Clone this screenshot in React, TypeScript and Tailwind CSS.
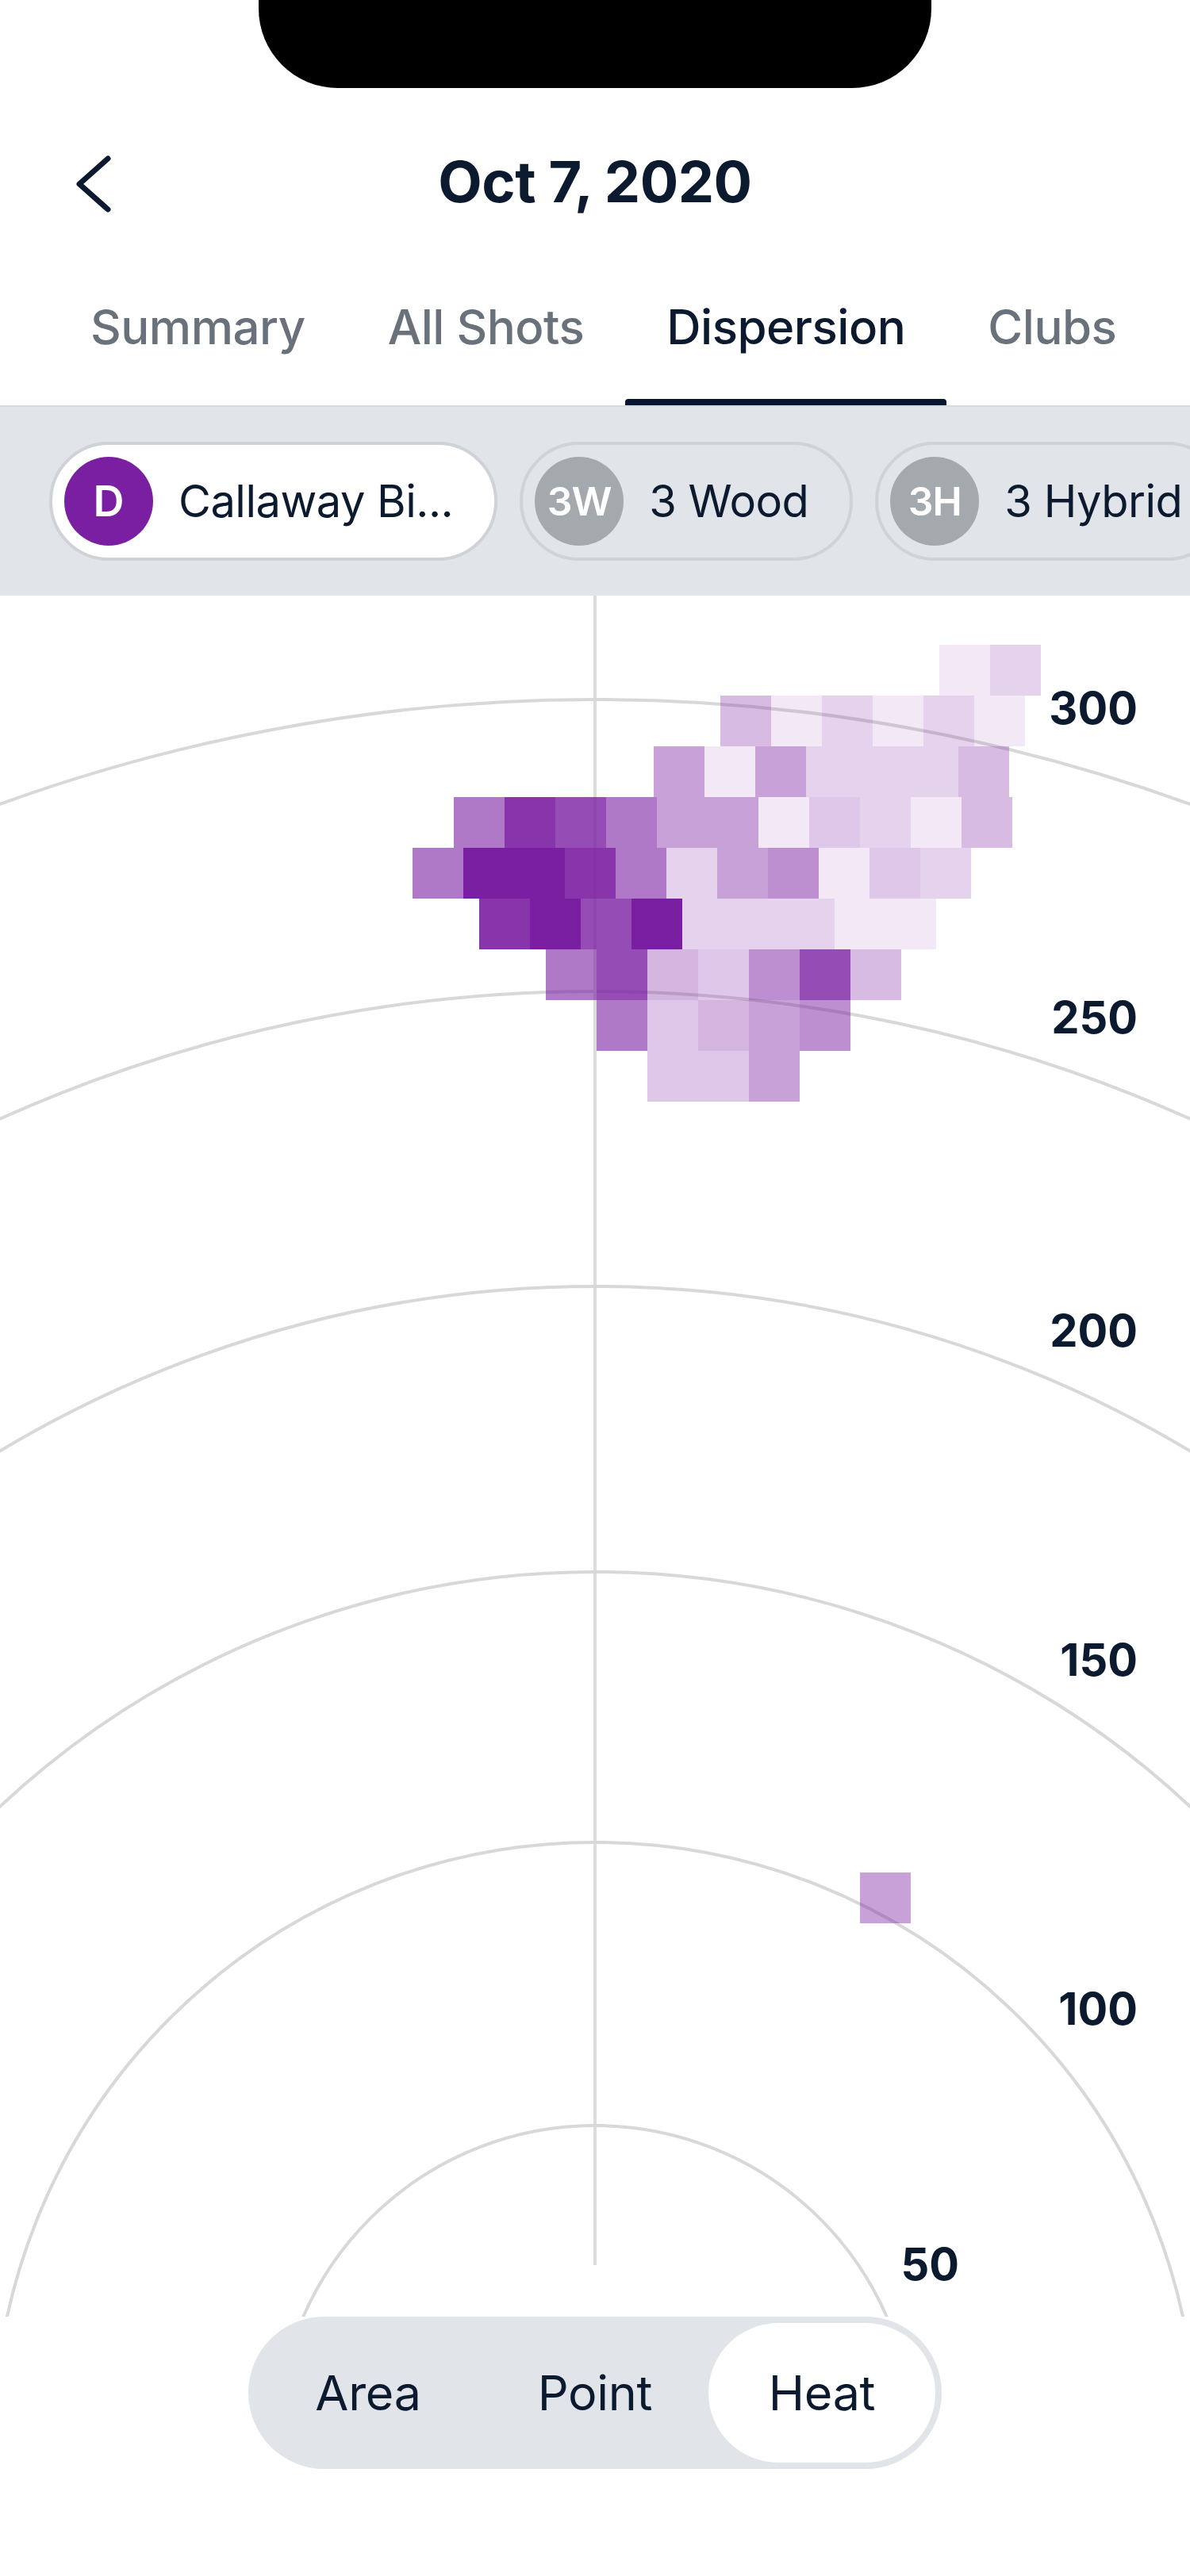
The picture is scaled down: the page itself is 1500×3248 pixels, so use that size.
import React from 'react';

const NAVY = '#0b1a2f';

// heat map rows: top y, left x of first cell, opacity of each 64px cell
const heatRows: [number, number, number[]][] = [
  [812, 1184, [0.1, 0.2]],
  [876, 908, [0.3, 0.1, 0.2, 0.1, 0.2, 0.1]],
  [940, 824, [0.42, 0.1, 0.42, 0.2, 0.2, 0.2, 0.3]],
  [1004, 572, [0.6, 0.9, 0.8, 0.6, 0.42, 0.42, 0.1, 0.25, 0.2, 0.1, 0.3]],
  [1068, 520, [0.6, 1, 1, 0.9, 0.6, 0.2, 0.42, 0.5, 0.1, 0.25, 0.2]],
  [1132, 604, [0.9, 1, 0.8, 1, 0.2, 0.2, 0.2, 0.1, 0.1]],
  [1196, 688, [0.6, 0.8, 0.33, 0.25, 0.5, 0.8, 0.3]],
  [1260, 752, [0.6, 0.25, 0.33, 0.42, 0.5]],
  [1324, 816, [0.25, 0.25, 0.42]],
  [2360, 1084, [0.42]],
];

// yardage rings around the tee point
const rings = [
  { r: 401, label: '50', x: 1209, y: 2874 },
  { r: 758, label: '100', x: 1434, y: 2552 },
  { r: 1099, label: '150', x: 1434, y: 2112 },
  { r: 1459, label: '200', x: 1434, y: 1697 },
  { r: 1831, label: '250', x: 1434, y: 1302 },
  { r: 2199, label: '300', x: 1434, y: 912 },
];

const tabs = ['Summary', 'All Shots', 'Dispersion', 'Clubs'];

const clubs = [
  { short: 'D', name: 'Callaway Bi...', active: true },
  { short: '3W', name: '3 Wood', active: false },
  { short: '3H', name: '3 Hybrid', active: false },
];

function DispersionChart() {
  return (
    <svg width={1500} height={2170} viewBox="0 750 1500 2170" className="block">
      <line x1={750} y1={750} x2={750} y2={2855} stroke="#dcdcdc" strokeWidth={4} />
      {rings.map((ring) => (
        <circle key={ring.r} cx={750} cy={3080} r={ring.r} fill="none" stroke="#d8d8d8" strokeWidth={4} />
      ))}
      {heatRows.map(([y, x0, cells]) =>
        cells.map((a, i) => (
          <rect key={`${y}-${i}`} x={x0 + i * 64} y={y} width={64} height={64} fill={`rgba(123,31,162,${a})`} />
        ))
      )}
      {rings.map((ring) => (
        <text
          key={ring.label}
          x={ring.x}
          y={ring.y}
          textAnchor="end"
          fontFamily="Inter, sans-serif"
          fontWeight={700}
          fontSize={56}
          fill={NAVY}
        >
          {ring.label}
        </text>
      ))}
    </svg>
  );
}

export default function App() {
  return (
    <div className="relative w-[1500px] h-[3248px] overflow-hidden bg-white [font-family:Inter,sans-serif] text-[#0b1a2f]">
      {/* device notch */}
      <div className="absolute top-0 left-[326px] w-[848px] h-[111px] bg-black rounded-b-[100px]" />

      <div className="h-[160px]" />

      <header className="grid grid-cols-[1fr_auto_1fr] items-center h-[137px]">
        <div className="pl-[96px] pt-[6px]">
          <svg width={48} height={80} viewBox="0 0 48 80" fill="none">
            <path d="M40 8 L4 40 L40 72" stroke={NAVY} strokeWidth={7} strokeLinecap="round" strokeLinejoin="round" />
          </svg>
        </div>
        <h1 className="text-[72px] font-bold leading-none tracking-[-0.5px]">Oct 7, 2020</h1>
        <div />
      </header>

      <nav className="flex h-[214px] pl-[62px]">
        {tabs.map((t) => {
          const on = t === 'Dispersion';
          return (
            <div key={t} className="flex flex-col items-stretch">
              <span
                className={`px-[52px] pt-[85px] text-[60px] font-medium leading-none tracking-[-0.5px] ${on ? 'text-[#0b1a2f]' : 'text-[#69717b]'}`}
              >
                {t}
              </span>
              <div className={`mt-auto h-[8px] rounded-t-[4px] ${on ? 'bg-[#061530]' : 'bg-transparent'}`} />
            </div>
          );
        })}
      </nav>

      <div className="flex items-center gap-[28px] h-[240px] pl-[62px] bg-[#e1e4e8] border-t-[2px] border-[#d8dbdf] overflow-hidden">
        {clubs.map((c) => (
          <div
            key={c.short}
            className={`flex shrink-0 items-center gap-[32px] h-[150px] pl-[15px] pr-[52px] rounded-full border-[4px] border-[#cfd3d8] ${c.active ? 'bg-white' : 'bg-transparent'}`}
          >
            <div
              className={`flex items-center justify-center w-[112px] h-[112px] rounded-full text-white font-semibold leading-none ${c.active ? 'bg-[#7b1fa2] text-[54px]' : 'bg-[#a4a9ae] text-[50px] tracking-[-1px]'}`}
            >
              {c.short}
            </div>
            <span className="text-[56px] leading-none tracking-[-0.5px] text-[#0b1a2f] whitespace-nowrap">{c.name}</span>
          </div>
        ))}
      </div>

      <DispersionChart />

      <div className="flex justify-center">
        <div className="flex w-[874px] h-[192px] p-[8px] rounded-full bg-[#e1e4e8]">
          {['Area', 'Point', 'Heat'].map((m) => (
            <div
              key={m}
              className={`flex flex-1 items-center justify-center rounded-full text-[61px] leading-none tracking-[-0.3px] ${m === 'Heat' ? 'bg-white' : ''}`}
            >
              {m}
            </div>
          ))}
        </div>
      </div>
    </div>
  );
}
